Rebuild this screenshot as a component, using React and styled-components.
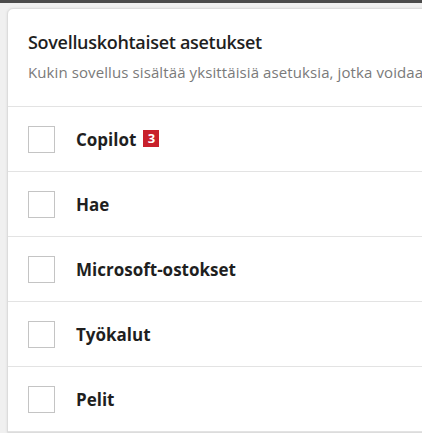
import React from 'react'
import styled, { createGlobalStyle } from 'styled-components'

const GlobalStyle = createGlobalStyle`
  html, body {
    margin: 0;
    padding: 0;
    background: #f0f0f0;
    font-family: 'Open Sans', 'Noto Sans', sans-serif;
    overflow: hidden;
  }
`

const apps = [
  { name: 'Copilot', badge: 3 },
  { name: 'Hae' },
  { name: 'Microsoft-ostokset' },
  { name: 'Työkalut' },
  { name: 'Pelit' },
]

export default function App() {
  return (
    <>
      <GlobalStyle />
      <Page>
        <TopBar />
        <Card>
          <Header>
            <Title>Sovelluskohtaiset asetukset</Title>
            <Subtitle>Kukin sovellus sisältää yksittäisiä asetuksia, jotka voidaan määrittää erikseen</Subtitle>
          </Header>
          {apps.map((app) => (
            <Row key={app.name}>
              <Checkbox type='checkbox' />
              <Label>{app.name}</Label>
              {app.badge && <Badge>{app.badge}</Badge>}
            </Row>
          ))}
        </Card>
      </Page>
    </>
  )
}

const Page = styled.div`
  width: 422px;
  height: 433px;
  overflow: hidden;
  background: #f0f0f0;
`

const TopBar = styled.div`
  height: 3px;
  background: #4b4b4b;
  margin-bottom: 5px;
`

const Card = styled.div`
  margin-left: 7px;
  width: 440px;
  background: #fff;
  border: 1px solid #dcdcdc;
  border-radius: 6px 0 0 0;
  box-shadow: 0 0 3px rgba(0, 0, 0, 0.08);
`

const Header = styled.div`
  padding: 21px 20px 0 20px;
  height: 76px;
  border-bottom: 1px solid #e3e3e3;
  white-space: nowrap;
  overflow: hidden;
`

const Title = styled.div`
  font-size: 18px;
  font-weight: 600;
  color: #1f1f1f;
  letter-spacing: -0.3px;
`

const Subtitle = styled.div`
  margin-top: 8px;
  font-size: 15px;
  color: #7a7a7a;
  letter-spacing: 0.1px;
`

const Row = styled.div`
  display: flex;
  align-items: center;
  height: 64px;
  padding-left: 20px;
  border-bottom: 1px solid #e3e3e3;
`

const Checkbox = styled.input`
  appearance: none;
  margin: 0;
  width: 27px;
  height: 27px;
  border: 1px solid #c4c4c4;
  background: #fff;
`

const Label = styled.span`
  margin-left: 21px;
  font-size: 17px;
  font-weight: 700;
  color: #1f1f1f;
`

const Badge = styled.span`
  margin-left: 7px;
  display: inline-flex;
  align-items: center;
  justify-content: center;
  width: 16px;
  height: 17px;
  background: #c8202b;
  color: #fff;
  font-size: 13px;
  font-weight: 700;
  margin-top: -2px;
`
